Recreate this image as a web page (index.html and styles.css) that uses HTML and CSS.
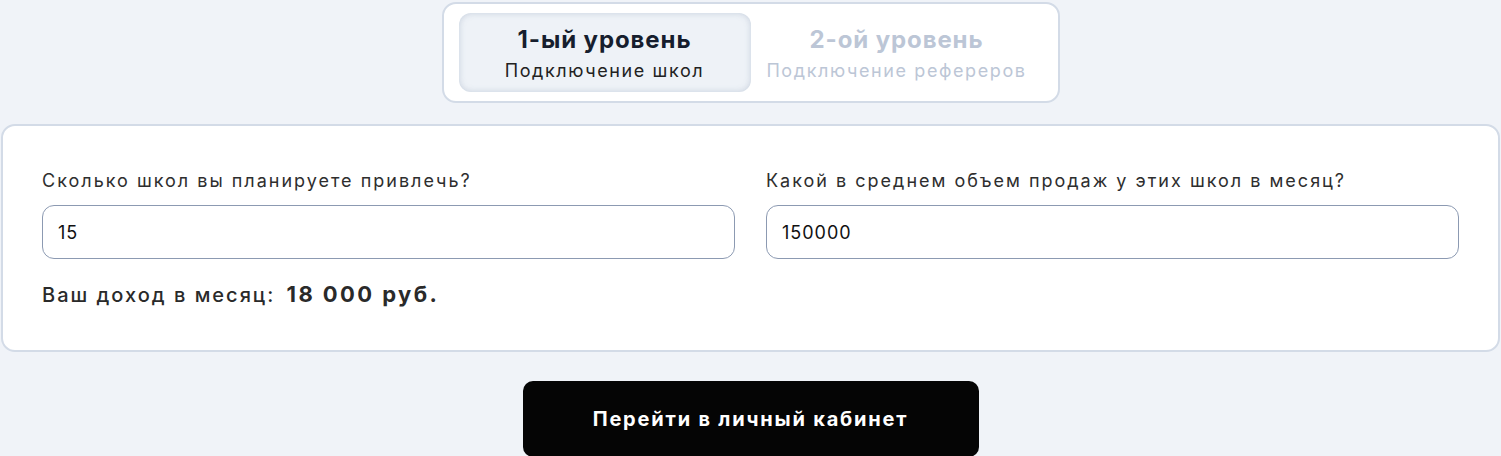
FILE: index.html
```html
<!DOCTYPE html>
<html>
  <head>
    <title>Калькулятор дохода</title>
    <link rel="stylesheet" href="styles.css">
  </head>
  <body>
    <div class="tabs">
      <div class="tab tab-active">
        <div class="tab-title">1-ый уровень</div>
        <div class="tab-sub">Подключение школ</div>
      </div>
      <div class="tab">
        <div class="tab-title">2-ой уровень</div>
        <div class="tab-sub">Подключение рефереров</div>
      </div>
    </div>

    <div class="card">
      <div class="fields">
        <div class="field">
          <label for="schools">Сколько школ вы планируете привлечь?</label>
          <input id="schools" type="text" value="15" />
        </div>
        <div class="field">
          <label for="sales">Какой в среднем объем продаж у этих школ в месяц?</label>
          <input id="sales" type="text" value="150000" />
        </div>
      </div>
      <div class="result">
        Ваш доход в месяц: <span class="result-value">18 000 руб.</span>
      </div>
    </div>

    <div class="actions">
      <button class="btn">Перейти в личный кабинет</button>
    </div>
  </body>
</html>
```

FILE: styles.css
```css
body {
  margin: 0;
  padding: 2px 1px 0;
  background: #f0f3f8;
  font-family: Inter, "Noto Sans", sans-serif;
  color: #2a2a2a;
}

.tabs {
  display: flex;
  width: 584px;
  margin: 0 auto;
  padding: 9px 15px;
  background: #fff;
  border: 2px solid #d3dbe7;
  border-radius: 14px;
}

.tab {
  flex: 1;
  height: 79px;
  box-sizing: border-box;
  padding-top: 4px;
  display: flex;
  flex-direction: column;
  align-items: center;
  justify-content: center;
  border-radius: 12px;
  color: #bcc6d6;
}

.tab-active {
  background: #eef2f7;
  color: #161e2e;
  box-shadow: inset 0 0 6px rgba(120, 140, 170, 0.35);
}

.tab-title {
  font-size: 24px;
  font-weight: 700;
  line-height: 30px;
  letter-spacing: 0.9px;
}

.tab-sub {
  font-size: 18px;
  line-height: 26px;
  margin-top: 3px;
  letter-spacing: 1.6px;
}

.tab-active .tab-sub {
  color: #222;
}

.card {
  margin-top: 21px;
  background: #fff;
  border: 2px solid #d3dbe7;
  border-radius: 14px;
  padding: 42px 39px 41px;
}

.fields {
  display: flex;
  gap: 31px;
}

.field {
  flex: 1;
  display: flex;
  flex-direction: column;
}

label {
  font-size: 18px;
  line-height: 26px;
  color: #2e2e2e;
  margin-bottom: 11px;
  letter-spacing: 2px;
}

input {
  height: 54px;
  box-sizing: border-box;
  border: 1px solid #8c9ab2;
  border-radius: 12px;
  padding: 0 15px;
  font-family: Inter, "Noto Sans", sans-serif;
  font-size: 18px;
  letter-spacing: 1px;
  color: #111;
  outline: none;
}

.result {
  margin-top: 21px;
  font-size: 20px;
  font-weight: 500;
  line-height: 28px;
  letter-spacing: 2px;
  color: #2a2a2a;
}

.result-value {
  margin-left: 4px;
  font-size: 22px;
  font-weight: 700;
  letter-spacing: 2.4px;
}

.actions {
  display: flex;
  justify-content: center;
  margin-top: 29px;
}

.btn {
  width: 456px;
  height: 76px;
  background: #050505;
  color: #fff;
  border: none;
  border-radius: 10px;
  font-family: Inter, "Noto Sans", sans-serif;
  font-size: 20px;
  font-weight: 700;
  letter-spacing: 1.8px;
  cursor: pointer;
}
```
